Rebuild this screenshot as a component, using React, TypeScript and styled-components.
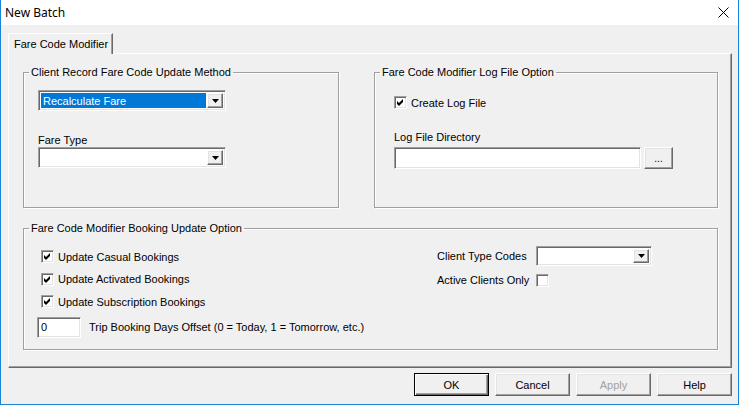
import React from "react";
import styled, { createGlobalStyle, css } from "styled-components";

const GlobalStyle = createGlobalStyle`
  html, body {
    margin: 0;
    padding: 0;
    background: #f0f0f0;
  }
  body {
    font-family: "Liberation Sans", Arial, sans-serif;
    font-size: 11px;
    color: #000;
  }
`;

// classic 3D edges
const sunken = css`
  border: 1px solid;
  border-color: #a0a0a0 #fff #fff #a0a0a0;
  box-shadow: inset 1px 1px 0 #696969, inset -1px -1px 0 #e3e3e3;
`;

const raised = css`
  border: 1px solid;
  border-color: #fff #696969 #696969 #fff;
  box-shadow: inset -1px -1px 0 #a0a0a0, inset 1px 1px 0 #e3e3e3;
`;

const Window = styled.div`
  width: 739px;
  height: 405px;
  box-sizing: border-box;
  border: 1px solid #1883d7;
  border-top: none;
  background: #f0f0f0;
  display: flex;
  flex-direction: column;
`;

const TitleBar = styled.div`
  height: 25px;
  flex: none;
  background: #fff;
  display: flex;
  align-items: center;
  justify-content: space-between;
  padding: 0 9px 0 4px;
  font-family: "Noto Sans", "Open Sans", sans-serif;
  font-size: 12px;
`;

const CloseIcon = () => (
  <svg width="11" height="11" viewBox="0 0 11 11">
    <path d="M0.5 0.5 L10.5 10.5 M10.5 0.5 L0.5 10.5" stroke="#000" strokeWidth="1" fill="none" />
  </svg>
);

const Body = styled.div`
  flex: 1;
  display: flex;
  flex-direction: column;
  padding: 8px 6px 8px 7px;
`;

const TabStrip = styled.div`
  display: flex;
  height: 20px;
  position: relative;
  z-index: 1;
`;

const Tab = styled.div`
  box-sizing: border-box;
  height: 21px;
  padding: 0 4px 0 5px;
  display: flex;
  align-items: center;
  background: #f0f0f0;
  border-top: 1px solid #fff;
  border-left: 1px solid #fff;
  border-right: 1px solid #696969;
  box-shadow: inset -1px 0 0 #a0a0a0;
`;

const TabPanel = styled.div`
  box-sizing: border-box;
  height: 315px;
  border: 1px solid;
  border-color: #fff #696969 #696969 #fff;
  box-shadow: inset -1px -1px 0 #a0a0a0;
  padding: 12px 13px 0 14px;
  display: grid;
  grid-template-columns: 316px 344px;
  grid-template-rows: 142px 128px;
  justify-content: space-between;
  row-gap: 14px;
`;

const Group = styled.fieldset<{ $wide?: boolean }>`
  margin: 0;
  padding: 0;
  min-width: 0;
  box-sizing: border-box;
  border: 1px solid #a0a0a0;
  box-shadow: 1px 1px 0 #fff, inset 1px 1px 0 #fff;
  grid-column: ${(p) => (p.$wide ? "1 / -1" : "auto")};
`;

const Legend = styled.legend`
  padding: 0 2px;
  margin-left: 5px;
  line-height: 13px;
`;

const GroupBody = styled.div<{ $pad: string }>`
  padding: ${(p) => p.$pad};
  display: flex;
  flex-direction: column;
  align-items: flex-start;
`;

const Label = styled.div<{ $top?: number }>`
  line-height: 13px;
  margin-top: ${(p) => p.$top ?? 0}px;
  white-space: nowrap;
`;

const ComboBox = styled.div<{ $w: number; $h: number }>`
  box-sizing: border-box;
  width: ${(p) => p.$w}px;
  height: ${(p) => p.$h}px;
  background: #fff;
  ${sunken};
  display: flex;
  padding: 2px;
  gap: 1px;
  flex: none;
`;

const ComboValue = styled.div<{ $selected?: boolean }>`
  flex: 1;
  display: flex;
  align-items: center;
  padding-left: 2px;
  background: ${(p) => (p.$selected ? "#0078d7" : "transparent")};
  color: ${(p) => (p.$selected ? "#fff" : "#000")};
  white-space: nowrap;
`;

const DropButton = styled.div`
  box-sizing: border-box;
  width: 16px;
  background: #f0f0f0;
  ${raised};
  display: flex;
  align-items: center;
  justify-content: center;
`;

const Arrow = () => (
  <svg width="7" height="4" viewBox="0 0 7 4">
    <path d="M0 0 H7 L3.5 4 Z" fill="#000" />
  </svg>
);

const Combo = ({ w, h, value, selected }: { w: number; h: number; value?: string; selected?: boolean }) => (
  <ComboBox $w={w} $h={h}>
    <ComboValue $selected={selected}>{value}</ComboValue>
    <DropButton>
      <Arrow />
    </DropButton>
  </ComboBox>
);

const CheckRow = styled.div`
  display: flex;
  align-items: center;
  gap: 4px;
  height: 13px;
  white-space: nowrap;
`;

const Box = styled.div`
  box-sizing: border-box;
  width: 13px;
  height: 13px;
  flex: none;
  background: #fff;
  ${sunken};
  display: flex;
  align-items: center;
  justify-content: center;
`;

const Tick = () => (
  <svg width="9" height="9" viewBox="0 0 9 9">
    <path d="M1 3 L3 5 L7 1 L7 4 L3 8 L1 6 Z" fill="#000" />
  </svg>
);

const CheckBox = ({ checked }: { checked?: boolean }) => <Box>{checked && <Tick />}</Box>;

const TextField = styled.div<{ $w: number; $h: number }>`
  box-sizing: border-box;
  width: ${(p) => p.$w}px;
  height: ${(p) => p.$h}px;
  background: #fff;
  ${sunken};
  padding: 3px 3px;
  line-height: 13px;
  flex: none;
`;

const PathRow = styled.div`
  display: flex;
  gap: 3px;
  margin-top: 3px;
`;

const BrowseButton = styled.div`
  box-sizing: border-box;
  width: 29px;
  height: 22px;
  background: #f0f0f0;
  ${raised};
  display: flex;
  align-items: flex-end;
  justify-content: center;
  padding-bottom: 4px;
  font-size: 10px;
`;

const BookingLayout = styled.div`
  width: 100%;
  display: flex;
  justify-content: space-between;
  align-items: flex-start;
`;

const CheckList = styled.div`
  display: flex;
  flex-direction: column;
  gap: 9.5px;
`;

const OffsetRow = styled.div`
  display: flex;
  align-items: center;
  gap: 8px;
  margin: -1px 0 0 -4px;
`;

const ClientGrid = styled.div`
  display: grid;
  grid-template-columns: 99px 116px;
  row-gap: 8px;
  align-items: center;
  margin-top: -4px;
`;

const ButtonBar = styled.div`
  display: flex;
  justify-content: flex-end;
  gap: 6px;
  margin-top: 5px;
`;

const DialogButton = styled.div<{ $default?: boolean; $disabled?: boolean }>`
  box-sizing: border-box;
  width: 75px;
  height: 23px;
  background: #f0f0f0;
  display: flex;
  align-items: center;
  justify-content: center;
  color: ${(p) => (p.$disabled ? "#a0a0a0" : "#000")};
  ${(p) =>
    p.$default
      ? css`
          border: 1px solid #000;
          box-shadow: inset 1px 1px 0 #fff, inset -1px -1px 0 #696969, inset -2px -2px 0 #a0a0a0;
        `
      : raised}
`;

export default function App() {
  return (
    <>
      <GlobalStyle />
      <Window>
        <TitleBar>
          <span>New Batch</span>
          <CloseIcon />
        </TitleBar>
        <Body>
          <TabStrip>
            <Tab>Fare Code Modifier</Tab>
          </TabStrip>
          <TabPanel>
            <Group>
              <Legend>Client Record Fare Code Update Method</Legend>
              <GroupBody $pad="11px 0 0 14px">
                <Combo w={188} h={21} value="Recalculate Fare" selected />
                <Label $top={23}>Fare Type</Label>
                <Combo w={188} h={21} />
              </GroupBody>
            </Group>
            <Group>
              <Legend>Fare Code Modifier Log File Option</Legend>
              <GroupBody $pad="17px 0 0 19px">
                <CheckRow>
                  <CheckBox checked />
                  Create Log File
                </CheckRow>
                <Label $top={22}>Log File Directory</Label>
                <PathRow>
                  <TextField $w={247} $h={22} />
                  <BrowseButton>...</BrowseButton>
                </PathRow>
              </GroupBody>
            </Group>
            <Group $wide>
              <Legend>Fare Code Modifier Booking Update Option</Legend>
              <GroupBody $pad="15px 65px 0 17px">
                <BookingLayout>
                  <CheckList>
                    <CheckRow>
                      <CheckBox checked />
                      Update Casual Bookings
                    </CheckRow>
                    <CheckRow>
                      <CheckBox checked />
                      Update Activated Bookings
                    </CheckRow>
                    <CheckRow>
                      <CheckBox checked />
                      Update Subscription Bookings
                    </CheckRow>
                    <OffsetRow>
                      <TextField $w={44} $h={21}>0</TextField>
                      Trip Booking Days Offset (0 = Today, 1 = Tomorrow, etc.)
                    </OffsetRow>
                  </CheckList>
                  <ClientGrid>
                    <Label>Client Type Codes</Label>
                    <Combo w={116} h={20} />
                    <Label>Active Clients Only</Label>
                    <CheckBox />
                  </ClientGrid>
                </BookingLayout>
              </GroupBody>
            </Group>
          </TabPanel>
          <ButtonBar>
            <DialogButton $default>OK</DialogButton>
            <DialogButton>Cancel</DialogButton>
            <DialogButton $disabled>Apply</DialogButton>
            <DialogButton>Help</DialogButton>
          </ButtonBar>
        </Body>
      </Window>
    </>
  );
}
